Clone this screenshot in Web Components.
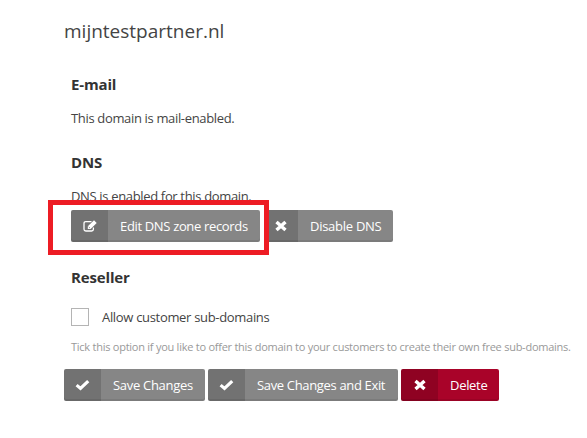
<!DOCTYPE html>
<html lang="en">
<head>
<meta charset="utf-8">
<title>mijntestpartner.nl</title>
<style>
  body {
    margin: 0;
    background: #fff;
    color: #444;
    font-family: "Open Sans", "Noto Sans", sans-serif;
    font-size: 13px;
  }
</style>
</head>
<body>
<domain-page>
  <span slot="title">mijntestpartner.nl</span>
  <form-section heading="E-mail">
    <text-line>This domain is mail-enabled.</text-line>
  </form-section>
  <form-section heading="DNS">
    <text-line class="dns">DNS is enabled for this domain.</text-line>
    <button-row style="--gap: 4px">
      <highlight-box>
        <icon-button icon="edit" style="--width: 189px">Edit DNS zone records</icon-button>
      </highlight-box>
      <icon-button icon="times" style="--width: 129px; --icon-width: 34px; --ls: -0.27px">Disable DNS</icon-button>
    </button-row>
  </form-section>
  <form-section heading="Reseller" style="--space: 24px">
    <check-option>
      Allow customer sub-domains
      <span slot="hint">Tick this option if you like to offer this domain to your customers to create their own free sub-domains.</span>
    </check-option>
  </form-section>
  <button-row slot="actions">
    <icon-button icon="check" style="--width: 141px; --ls: -0.3px">Save Changes</icon-button>
    <icon-button icon="check" style="--width: 190px">Save Changes and Exit</icon-button>
    <icon-button icon="times" variant="danger" style="--width: 98px; --ls: -0.3px">Delete</icon-button>
  </button-row>
</domain-page>

<script>
const ICONS = {
  check: `<svg width="15" height="12" viewBox="0 0 15 12"><path d="M1.6 6.1 L5.5 9.4 L13.2 2.1" fill="none" stroke="#fff" stroke-width="3.2"/></svg>`,
  times: `<svg width="12" height="12" viewBox="0 0 12 12"><path d="M1.5 2 L10.5 10 M10.5 2 L1.5 10" fill="none" stroke="#fff" stroke-width="3.4"/></svg>`,
  edit: `<svg width="14" height="12" viewBox="0 0 14 12"><path d="M8.5 1.6H2.8Q1 1.6 1 3.4V9.2Q1 11 2.8 11H8.6Q10.4 11 10.4 9.2V7.6" fill="none" stroke="#fff" stroke-width="1.3"/><path d="M11 .3 13.7 3 7.6 8.9H4.8V6.2Z" fill="#fff"/><path d="M5.7 6.8 7 8.1" stroke="#727272" stroke-width=".7"/></svg>`
};

function render(element, html) {
  element.attachShadow({ mode: "open" });
  const template = document.createElement("template");
  template.innerHTML = html;
  element.shadowRoot.appendChild(template.content.cloneNode(true));
}

class DomainPage extends HTMLElement {
  constructor() {
    super();
    render(this, `
      <style>
        :host { display: block; padding: 17px 0 0 64px; }
        h1 {
          margin: 0 0 28px;
          font-size: 19px;
          line-height: 28px;
          font-weight: 400;
        }
        .sections { padding-left: 7px; }
        .actions { padding-top: 13px; }
      </style>
      <h1><slot name="title"></slot></h1>
      <div class="sections"><slot></slot></div>
      <div class="actions"><slot name="actions"></slot></div>
    `);
  }
}

class FormSection extends HTMLElement {
  constructor() {
    super();
    render(this, `
      <style>
        :host { display: block; }
        :host(:not(:first-of-type)) { padding-top: var(--space, 23px); }
        h2 {
          margin: 0 0 13px;
          color: #333;
          font-size: 15px;
          line-height: 22px;
          font-weight: 700;
          letter-spacing: -0.15px;
        }
      </style>
      <h2></h2>
      <slot></slot>
    `);
  }

  connectedCallback() {
    this.shadowRoot.querySelector("h2").textContent = this.getAttribute("heading");
  }
}

class TextLine extends HTMLElement {
  constructor() {
    super();
    render(this, `
      <style>
        :host { display: block; line-height: 20px; letter-spacing: -0.34px; white-space: nowrap; }
        :host(.dns) { margin-bottom: 4px; }
      </style>
      <slot></slot>
    `);
  }
}

class ButtonRow extends HTMLElement {
  constructor() {
    super();
    render(this, `
      <style>
        :host { display: flex; gap: var(--gap, 3px); }
      </style>
      <slot></slot>
    `);
  }
}

class HighlightBox extends HTMLElement {
  constructor() {
    super();
    render(this, `
      <style>
        :host { display: block; position: relative; }
        /* the frame lies over the neighbouring text and button */
        .frame {
          position: absolute;
          z-index: 1;
          inset: -10px -9px -13px -23px;
          border: 5px solid #ed1c24;
        }
      </style>
      <slot></slot>
      <div class="frame"></div>
    `);
  }
}

class IconButton extends HTMLElement {
  constructor() {
    super();
    render(this, `
      <style>
        :host {
          display: flex;
          box-sizing: border-box;
          width: var(--width);
          height: 32px;
          border-radius: 2px;
          overflow: hidden;
          background: #868686;
          box-shadow: inset 0 -2px rgba(0, 0, 0, .08);
          color: #fff;
          line-height: 32px;
          letter-spacing: var(--ls, -0.34px);
          white-space: nowrap;
          cursor: pointer;
        }
        :host([variant="danger"]) { background: #a90329; }
        .icon {
          display: flex;
          flex: none;
          align-items: center;
          justify-content: center;
          width: var(--icon-width, 37px);
          background: rgba(0, 0, 0, .15);
        }
        .label { padding-left: 12px; }
      </style>
      <span class="icon"></span>
      <span class="label"><slot></slot></span>
    `);
  }

  connectedCallback() {
    this.shadowRoot.querySelector(".icon").innerHTML = ICONS[this.getAttribute("icon")];
  }
}

class CheckOption extends HTMLElement {
  constructor() {
    super();
    render(this, `
      <style>
        :host { display: block; padding-top: 6px; white-space: nowrap; }
        label {
          display: flex;
          align-items: center;
          gap: 13px;
          line-height: 20px;
          letter-spacing: -0.32px;
        }
        .box {
          box-sizing: border-box;
          width: 18px;
          height: 18px;
          border: 1px solid #b4b4b4;
          background: #fff;
        }
        .hint {
          margin-top: 11px;
          color: #999;
          font-size: 11px;
          line-height: 18px;
          letter-spacing: -0.25px;
        }
      </style>
      <label><span class="box"></span><span><slot></slot></span></label>
      <div class="hint"><slot name="hint"></slot></div>
    `);
  }
}

customElements.define("domain-page", DomainPage);
customElements.define("form-section", FormSection);
customElements.define("text-line", TextLine);
customElements.define("button-row", ButtonRow);
customElements.define("highlight-box", HighlightBox);
customElements.define("icon-button", IconButton);
customElements.define("check-option", CheckOption);
</script>
</body>
</html>
